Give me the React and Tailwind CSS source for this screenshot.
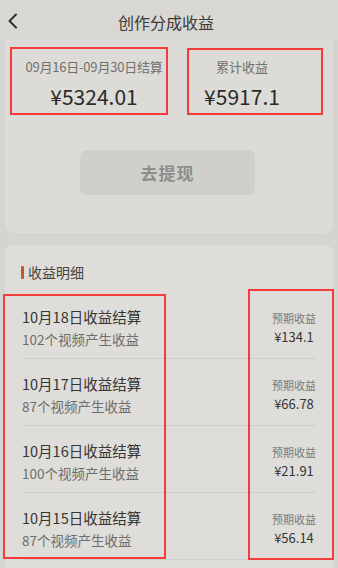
import React from "react";

const rows = [
  { date: "10月18日收益结算", sub: "102个视频产生收益", amt: "¥134.1" },
  { date: "10月17日收益结算", sub: "87个视频产生收益", amt: "¥66.78" },
  { date: "10月16日收益结算", sub: "100个视频产生收益", amt: "¥21.91" },
  { date: "10月15日收益结算", sub: "87个视频产生收益", amt: "¥56.14" },
];

export default function App() {
  return (
    <div
      className="relative w-[338px] h-[568px] overflow-hidden bg-[#d4d4d0]"
      style={{ fontFamily: '"Noto Sans CJK SC", "Noto Sans", sans-serif' }}
    >
      {/* header */}
      <div className="relative h-[40px] flex items-center justify-center bg-[#d8d7d3]">
        <svg
          className="absolute left-[7px] top-[13px]"
          width="12"
          height="16"
          viewBox="0 0 12 16"
          fill="none"
        >
          <path d="M9 1.5 L2.5 8 L9 14.5" stroke="#2e2e2e" strokeWidth="2" strokeLinecap="round" strokeLinejoin="round" />
        </svg>
        <span className="text-[16px] leading-[20px] text-[#3a3a38] mt-[3px] mr-[6px]">创作分成收益</span>
      </div>

      {/* top card */}
      <div className="mx-[5px] h-[193px] rounded-b-[8px] bg-[#dcdbd7]">
        <div className="flex pt-[18px]">
          <div className="ml-[10px] w-[158px] flex flex-col items-center">
            <span className="text-[13px] leading-[18px] text-[#72716d] tracking-[-0.2px]">09月16日-09月30日结算</span>
            <span className="mt-[6px] text-[21px] leading-[28px] text-[#2a2a2a]">¥5324.01</span>
          </div>
          <div className="ml-[14px] w-[110px] flex flex-col items-center">
            <span className="text-[13px] leading-[18px] text-[#72716d]">累计收益</span>
            <span className="mt-[6px] text-[21px] leading-[28px] text-[#2a2a2a]">¥5917.1</span>
          </div>
        </div>
        <div className="mt-[40px] ml-[75px] w-[175px] h-[45px] rounded-[7px] bg-[#d0d0cb] flex items-center justify-center">
          <span className="text-[17px] font-bold text-[#8d8d89] tracking-[1px]">去提现</span>
        </div>
      </div>

      {/* detail card */}
      <div className="mx-[5px] mt-[12px] rounded-t-[8px] bg-[#dedddA] h-[340px]">
        <div className="flex items-center pl-[16px] pt-[17px] h-[37px]">
          <span className="w-[3px] h-[13px] bg-[#c4582a] rounded-[1px]" />
          <span className="ml-[4px] text-[14px] leading-[20px] text-[#444441]">收益明细</span>
        </div>
        <div className="mt-[10px] px-[17px]">
          {rows.map((r) => (
            <div key={r.date} className="flex items-center justify-between border-b border-[#cfcecb] pt-[15px] pb-[9px]">
              <div className="flex flex-col">
                <span className="text-[14.5px] leading-[20px] text-[#363634]">{r.date}</span>
                <span className="mt-[2px] text-[13.5px] leading-[20px] text-[#6e6d69]">{r.sub}</span>
              </div>
              <div className="flex flex-col items-center">
                <span className="text-[11px] leading-[16px] text-[#7a7975]">预期收益</span>
                <span className="mt-[2px] text-[13px] leading-[18px] text-[#353533]">{r.amt}</span>
              </div>
            </div>
          ))}
        </div>
      </div>

      {/* red annotation boxes */}
      <div className="absolute left-[10px] top-[47px] w-[158px] h-[68px] border-2 border-[#f43c3c]" />
      <div className="absolute left-[187px] top-[48px] w-[136px] h-[67px] border-2 border-[#f43c3c]" />
      <div className="absolute left-[3px] top-[294px] w-[163px] h-[265px] border-2 border-[#f43c3c]" />
      <div className="absolute left-[248px] top-[289px] w-[86px] h-[271px] border-2 border-[#f43c3c]" />
    </div>
  );
}
